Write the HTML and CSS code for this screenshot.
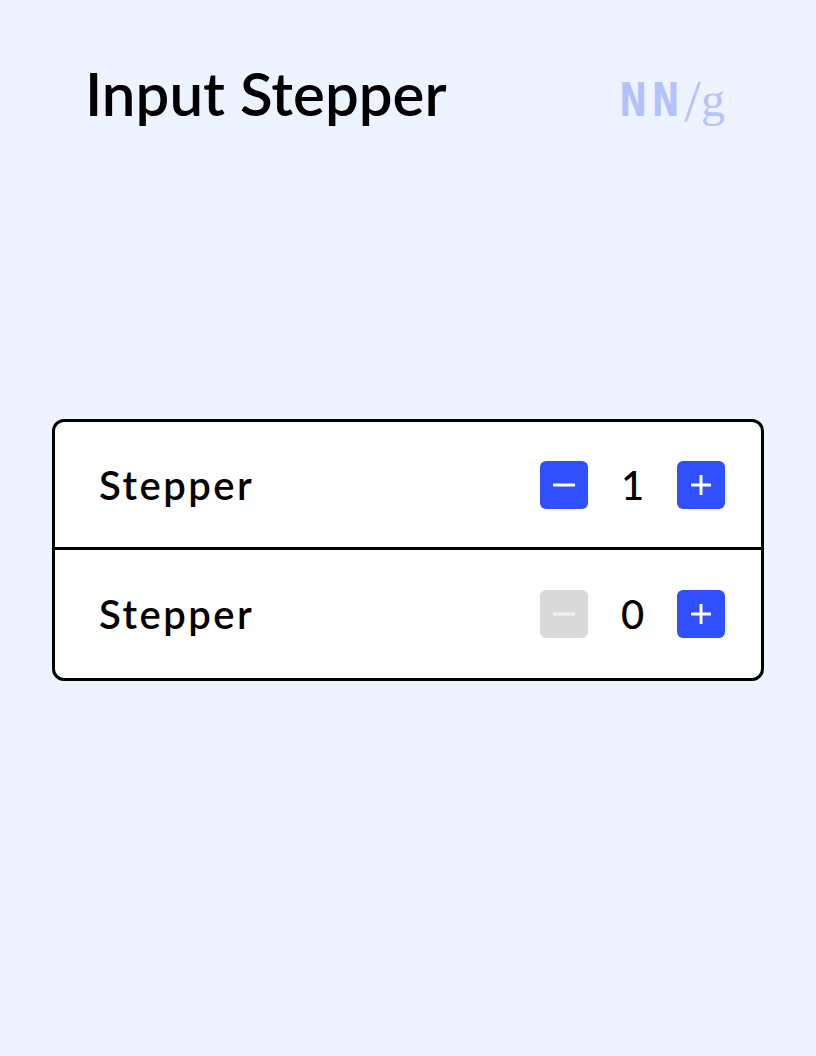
FILE: index.html
```html
<!DOCTYPE html>
<html lang="en">
<head>
    <meta charset="UTF-8">
    <meta name="viewport" content="width=device-width, initial-scale=1.0">
    <title>Input Stepper</title>
    <link rel="stylesheet" href="styles.css">
</head>
<body>
    <div class="page">
        <header class="header">
            <h1>Input Stepper</h1>
            <div class="logo"><span class="logo-nn">NN</span><span class="logo-slash">/</span><span class="logo-g">g</span></div>
        </header>
        <div class="card">
            <div class="row">
                <span class="label">Stepper</span>
                <div class="stepper">
                    <button class="step-btn" aria-label="Decrease">
                        <svg width="24" height="24" viewBox="0 0 24 24"><path d="M1 12h22" stroke="#fff" stroke-width="3"/></svg>
                    </button>
                    <span class="value">1</span>
                    <button class="step-btn" aria-label="Increase">
                        <svg width="24" height="24" viewBox="0 0 24 24"><path d="M2 12h20M12 2v20" stroke="#fff" stroke-width="3"/></svg>
                    </button>
                </div>
            </div>
            <div class="row">
                <span class="label">Stepper</span>
                <div class="stepper">
                    <button class="step-btn" disabled aria-label="Decrease">
                        <svg width="24" height="24" viewBox="0 0 24 24"><path d="M1 12h22" stroke="#f2f2f2" stroke-width="3"/></svg>
                    </button>
                    <span class="value">0</span>
                    <button class="step-btn" aria-label="Increase">
                        <svg width="24" height="24" viewBox="0 0 24 24"><path d="M2 12h20M12 2v20" stroke="#fff" stroke-width="3"/></svg>
                    </button>
                </div>
            </div>
        </div>
    </div>
</body>
</html>
```

FILE: styles.css
```css
body {
    margin: 0;
    background-color: #EEF4FF;
    color: #000000;
    font-family: 'Lato', 'Noto Sans', sans-serif;
}

.page {
    width: 816px;
    height: 1056px;
}

.header {
    display: flex;
    justify-content: space-between;
    align-items: baseline;
    height: 60px;
    padding: 63px 91px 0 85px;
}

.header h1 {
    margin: 0;
    font-size: 60px;
    font-weight: 600;
    line-height: 1;
}

.logo {
    font-size: 46px;
    line-height: 1;
    color: #B3C2FF;
    white-space: nowrap;
}

.logo-nn {
    display: inline-block;
    font-family: 'DejaVu Sans Condensed', 'DejaVu Sans', sans-serif;
    font-weight: bold;
    letter-spacing: 6px;
    transform: scaleX(0.8);
    transform-origin: right center;
}

.logo-slash {
    font-family: 'Liberation Serif', serif;
    font-size: 60px;
    line-height: 0;
    vertical-align: -5px;
    color: #B6C4FA;
}

.logo-g {
    font-family: 'Liberation Serif', serif;
    font-size: 48px;
    color: #B6C4FA;
}

.card {
    margin: 296px 0 0 52px;
    width: 706px;
    background-color: #FFFFFF;
    border: 3px solid #000000;
    border-radius: 12px;
}

.row {
    display: flex;
    justify-content: space-between;
    align-items: center;
    height: 125px;
    padding: 0 36px 0 44px;
}

.row + .row {
    border-top: 3px solid #000000;
    height: 128px;
}

.label {
    font-size: 40px;
    font-weight: 600;
    letter-spacing: 2.5px;
}

.stepper {
    display: flex;
    align-items: center;
}

.step-btn {
    width: 48px;
    height: 48px;
    padding: 0;
    border: none;
    border-radius: 6px;
    background-color: #3050FF;
    display: flex;
    justify-content: center;
    align-items: center;
    cursor: pointer;
}

.step-btn:disabled {
    background-color: #D9D9D9;
    cursor: not-allowed;
}

.value {
    width: 89px;
    text-align: center;
    font-size: 40px;
    font-weight: 500;
}
```
